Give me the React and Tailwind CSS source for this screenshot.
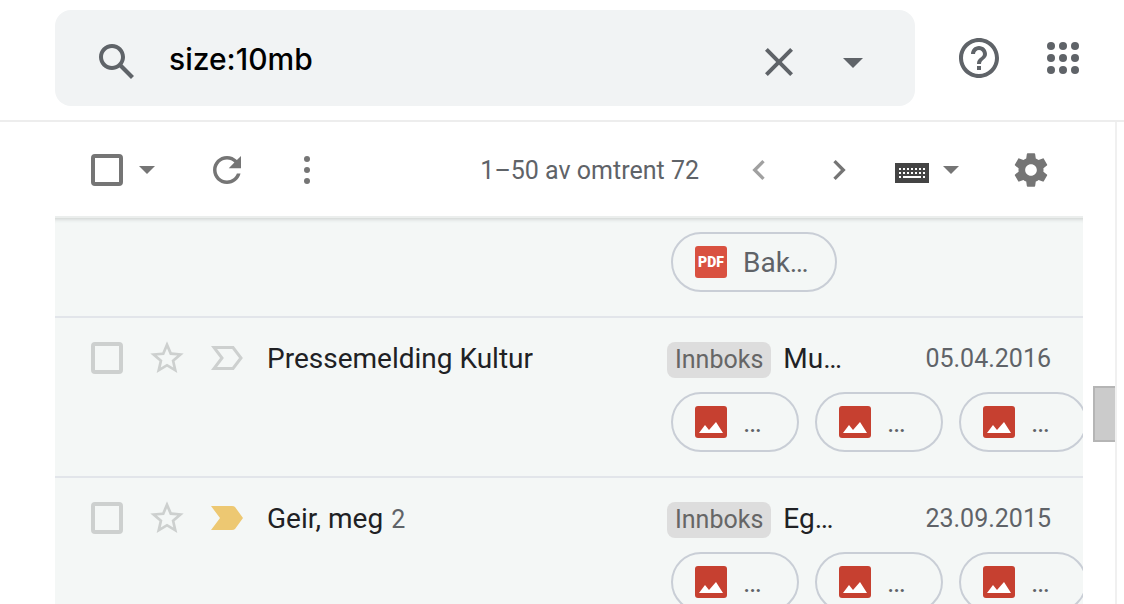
import { useState } from "react";

const messages = [
  {
    id: 1,
    sender: "Pressemelding Kultur",
    count: null,
    important: false,
    subject: "Mu…",
    date: "05.04.2016",
  },
  {
    id: 2,
    sender: "Geir, meg",
    count: 2,
    important: true,
    subject: "Eg…",
    date: "23.09.2015",
  },
];

function Icon({ className, box = "0 0 24 24", children }) {
  return (
    <svg className={className} viewBox={box} fill="currentColor" aria-hidden="true">
      {children}
    </svg>
  );
}

function Caret({ className }) {
  return (
    <Icon className={className} box="0 0 16 8">
      <path d="M0 0h16L8 8z" />
    </Icon>
  );
}

function KeyboardIcon() {
  const keys = [4, 8, 12, 16, 20, 24, 28];
  return (
    <Icon className="h-5 w-[34px] text-[#444444]" box="0 0 34 20">
      <path d="M0 0h34v20H0z" />
      <g fill="#ffffff">
        {keys.map((x) => (
          <path key={x} d={`M${x} 5h2v2h-2zM${x} 9h2v2h-2z`} />
        ))}
        <path d="M4 13h2v2H4zM28 13h2v2h-2zM8 13h18v2H8z" />
      </g>
    </Icon>
  );
}

function ImportantMarker({ active }) {
  return active ? (
    <Icon className="h-6 w-8 text-[#edc872]" box="0 0 32 24">
      <path d="M0 0h21q2 0 3 1l8 11-8 11q-1 1-3 1H0l9-12z" />
    </Icon>
  ) : (
    <svg className="h-6 w-8 text-[#cdd0cf]" viewBox="0 0 32 24" fill="none" stroke="currentColor" strokeWidth="3" aria-hidden="true">
      <path d="M3 1.5h19L30 12l-8 10.5H3L11 12z" />
    </svg>
  );
}

function PdfIcon() {
  return (
    <span className="flex size-8 shrink-0 items-center justify-center rounded-[3px] bg-[#d95140] text-[14px] leading-none font-black text-white">
      PDF
    </span>
  );
}

function ImageIcon() {
  return (
    <svg className="size-8 shrink-0" viewBox="0 0 32 32" aria-hidden="true">
      <rect width="32" height="32" rx="3" fill="#c64030" />
      <path d="M4 27l6-8 4 5 7-8 7 11z" fill="#ffffff" />
    </svg>
  );
}

function Chip({ icon, label, className }) {
  return (
    <button
      type="button"
      className={`flex h-[60px] shrink-0 items-center gap-4 rounded-full border-2 border-[#c9ced6] px-[22px] text-[28px] leading-8 text-[#5f6368] ${className}`}
    >
      {icon}
      <span className="pt-0.5">{label}</span>
    </button>
  );
}

function MessageRow({ message }) {
  const [selected, setSelected] = useState(false);

  return (
    <li className="flex h-40 shrink-0 border-t-2 border-[#e2e5ea] pl-9">
      <div className="flex h-20 min-w-0 flex-1 items-center">
        <input
          type="checkbox"
          aria-label={`Velg ${message.sender}`}
          checked={selected}
          onChange={(e) => setSelected(e.target.checked)}
          className="mr-6 size-8 shrink-0 appearance-none rounded-[4px] border-4 border-[#cdd0cf] checked:bg-[#cdd0cf]"
        />
        <button type="button" aria-label="Stjernemerk" className="mr-6 shrink-0 text-[#cdd0cf]">
          <Icon className="size-10">
            <path d="M22 9.24l-7.19-.62L12 2 9.19 8.63 2 9.24l5.46 4.73L5.82 21 12 17.27 18.18 21l-1.63-7.03L22 9.24zM12 15.4l-3.76 2.27 1-4.28-3.32-2.88 4.38-.38L12 6.1l1.71 4.04 4.38.38-3.32 2.88 1 4.28L12 15.4z" />
          </Icon>
        </button>
        <button type="button" aria-label="Viktig" className="mr-6 shrink-0">
          <ImportantMarker active={message.important} />
        </button>
        <span className="truncate pt-0.5 text-[28px] leading-8 text-[#202124]">
          {message.sender}
          {message.count && <span className="ml-2 text-[25px] text-[#5f6368]">{message.count}</span>}
        </span>
      </div>

      <div className="w-[416px] shrink-0">
        <div className="flex h-[74px] items-center pt-2 pr-8">
          <span className="mt-0.5 mr-3 flex h-9 items-center rounded-lg bg-[#dddddd] px-2 text-[25px] leading-8 text-[#666666]">
            Innboks
          </span>
          <span className="text-[28px] leading-8 text-[#202124]">{message.subject}</span>
          <time className="ml-auto text-[25px] leading-8 text-[#5f6368]">{message.date}</time>
        </div>
        <div className="ml-1 flex gap-4">
          <Chip icon={<ImageIcon />} label="…" className="w-32" />
          <Chip icon={<ImageIcon />} label="…" className="w-32" />
          <Chip icon={<ImageIcon />} label="…" className="w-32" />
        </div>
      </div>
    </li>
  );
}

function Header() {
  const [query, setQuery] = useState("size:10mb");

  return (
    <header className="flex shrink-0 items-start border-b-2 border-[#ededed] pt-[10px] pr-[37px] pb-[14px] pl-[55px] text-[#5f6368]">
      <form
        className="flex h-24 min-w-0 flex-1 items-center rounded-2xl bg-[#f1f3f4] px-[38px] pt-2"
        onSubmit={(e) => e.preventDefault()}
      >
        <button type="submit" aria-label="Søk" className="shrink-0">
          <Icon className="size-12">
            <path d="M20.49 19l-5.73-5.73C15.53 12.2 16 10.91 16 9.5 16 5.91 13.09 3 9.5 3S3 5.91 3 9.5 5.91 16 9.5 16c1.41 0 2.7-.47 3.77-1.24L19 20.49 20.49 19zM5 9.5C5 7.01 7.01 5 9.5 5S14 7.01 14 9.5 11.99 14 9.5 14 5 11.99 5 9.5z" />
          </Icon>
        </button>
        <input
          type="text"
          aria-label="Søk i e-post"
          value={query}
          onChange={(e) => setQuery(e.target.value)}
          className="mx-7 h-12 min-w-0 flex-1 bg-transparent pb-1.5 font-[Inter,sans-serif] text-[30px] leading-10 font-medium text-black outline-none"
        />
        <button type="button" aria-label="Tøm søk" className="mr-[26px] shrink-0" onClick={() => setQuery("")}>
          <Icon className="size-12">
            <path d="M19 6.41L17.59 5 12 10.59 6.41 5 5 6.41 10.59 12 5 17.59 6.41 19 12 13.41 17.59 19 19 17.59 13.41 12z" />
          </Icon>
        </button>
        <button type="button" aria-label="Søkealternativer" className="shrink-0">
          <Icon className="size-12">
            <path d="M7 10l5 5 5-5z" />
          </Icon>
        </button>
      </form>
      <button type="button" aria-label="Hjelp" className="mt-6 ml-10 shrink-0">
        <Icon className="size-12">
          <path d="M11 18h2v-2h-2v2zm1-16C6.48 2 2 6.48 2 12s4.48 10 10 10 10-4.48 10-10S17.52 2 12 2zm0 18c-4.41 0-8-3.59-8-8s3.59-8 8-8 8 3.59 8 8-3.59 8-8 8zm0-14c-2.21 0-4 1.79-4 4h2c0-1.1.9-2 2-2s2 .9 2 2c0 2-3 1.75-3 5h2c0-2.25 3-2.5 3-5 0-2.21-1.79-4-4-4z" />
        </Icon>
      </button>
      <button type="button" aria-label="Apper" className="mt-6 ml-9 shrink-0">
        <Icon className="size-12">
          {[6, 12, 18].map((y) => [6, 12, 18].map((x) => <circle key={`${x}-${y}`} cx={x} cy={y} r="2" />))}
        </Icon>
      </button>
    </header>
  );
}

function Toolbar() {
  return (
    <div className="flex h-[94px] shrink-0 items-center pt-0.5 pr-8 pl-9 text-[#757575]">
      <input
        type="checkbox"
        aria-label="Velg alle"
        className="size-8 shrink-0 appearance-none rounded-[4px] border-4 border-[#757575] checked:bg-[#757575]"
      />
      <button type="button" aria-label="Velg" className="ml-4 shrink-0">
        <Caret className="h-2 w-4" />
      </button>
      <button type="button" aria-label="Last inn på nytt" className="ml-[58px] shrink-0">
        <Icon className="size-7" box="4 4 16 16">
          <path d="M17.65 6.35C16.2 4.9 14.21 4 12 4c-4.42 0-7.99 3.58-7.99 8s3.57 8 7.99 8c3.73 0 6.84-2.55 7.73-6h-2.08c-.82 2.33-3.04 4-5.65 4-3.31 0-6-2.69-6-6s2.69-6 6-6c1.66 0 3.14.69 4.22 1.78L13 11h7V4l-2.35 2.35z" />
        </Icon>
      </button>
      <button type="button" aria-label="Mer" className="ml-[60px] shrink-0">
        <Icon className="h-7 w-3" box="0 0 12 28">
          <circle cx="6" cy="3" r="3" />
          <circle cx="6" cy="14" r="3" />
          <circle cx="6" cy="25" r="3" />
        </Icon>
      </button>

      <span className="ml-auto pt-0.5 text-[25px] leading-8 whitespace-nowrap text-[#5f6368]">1–50 av omtrent 72</span>
      <button type="button" aria-label="Nyere" className="ml-10 shrink-0 text-[#a0a0a0]">
        <Icon className="size-10">
          <path d="M15.41 7.41L14 6l-6 6 6 6 1.41-1.41L10.83 12z" />
        </Icon>
      </button>
      <button type="button" aria-label="Eldre" className="ml-10 shrink-0">
        <Icon className="size-10">
          <path d="M10 6L8.59 7.41 13.17 12l-4.58 4.59L10 18l6-6z" />
        </Icon>
      </button>
      <button type="button" aria-label="Skriveverktøy" className="ml-9 flex shrink-0 items-center gap-[14px]">
        <span className="pt-1.5">
          <KeyboardIcon />
        </span>
        <Caret className="h-2 w-4" />
      </button>
      <button type="button" aria-label="Innstillinger" className="ml-[52px] shrink-0">
        <Icon className="size-10">
          <path d="M19.43 12.98c.04-.32.07-.64.07-.98s-.03-.66-.07-.98l2.11-1.65c.19-.15.24-.42.12-.64l-2-3.46c-.12-.22-.39-.3-.61-.22l-2.49 1c-.52-.4-1.08-.73-1.69-.98l-.38-2.65C14.46 2.18 14.25 2 14 2h-4c-.25 0-.46.18-.49.42l-.38 2.65c-.61.25-1.17.59-1.69.98l-2.49-1c-.23-.09-.49 0-.61.22l-2 3.46c-.13.22-.07.49.12.64l2.11 1.65c-.04.32-.07.65-.07.98s.03.66.07.98l-2.11 1.65c-.19.15-.24.42-.12.64l2 3.46c.12.22.39.3.61.22l2.49-1c.52.4 1.08.73 1.69.98l.38 2.65c.03.24.24.42.49.42h4c.25 0 .46-.18.49-.42l.38-2.65c.61-.25 1.17-.59 1.69-.98l2.49 1c.23.09.49 0 .61-.22l2-3.46c.12-.22.07-.49-.12-.64l-2.11-1.65zM12 15.5c-1.93 0-3.5-1.57-3.5-3.5s1.57-3.5 3.5-3.5 3.5 1.57 3.5 3.5-1.57 3.5-3.5 3.5z" />
        </Icon>
      </button>
    </div>
  );
}

function App() {
  return (
    <div className="flex h-screen flex-col overflow-hidden bg-white font-[Roboto,sans-serif]">
      <Header />

      <div className="flex min-h-0 flex-1 pr-[7px] pl-[55px]">
        <main className="flex min-w-0 flex-1 flex-col">
          <Toolbar />
          <ul className="flex min-h-0 flex-1 flex-col overflow-hidden border-t-2 border-[#ebeeed] bg-[#f4f7f6] shadow-[inset_0_5px_4px_-4px_#c8cccb]">
            {/* tail of the message above, only its attachment is in view */}
            <li className="flex h-[98px] shrink-0 justify-end pt-[14px]">
              <div className="flex w-[416px] pl-1">
                <Chip icon={<PdfIcon />} label="Bak…" className="w-[166px]" />
              </div>
            </li>
            {messages.map((message) => (
              <MessageRow key={message.id} message={message} />
            ))}
          </ul>
        </main>

        {/* scrollbar gutter */}
        <div className="flex w-[34px] shrink-0 justify-end border-r-2 border-[#f0f0f0]">
          <div className="mt-[264px] h-14 w-[22px] border-2 border-r-0 border-[#b5b5b5] bg-[#cbcbcb]" />
        </div>
      </div>
    </div>
  );
}

export default App;
